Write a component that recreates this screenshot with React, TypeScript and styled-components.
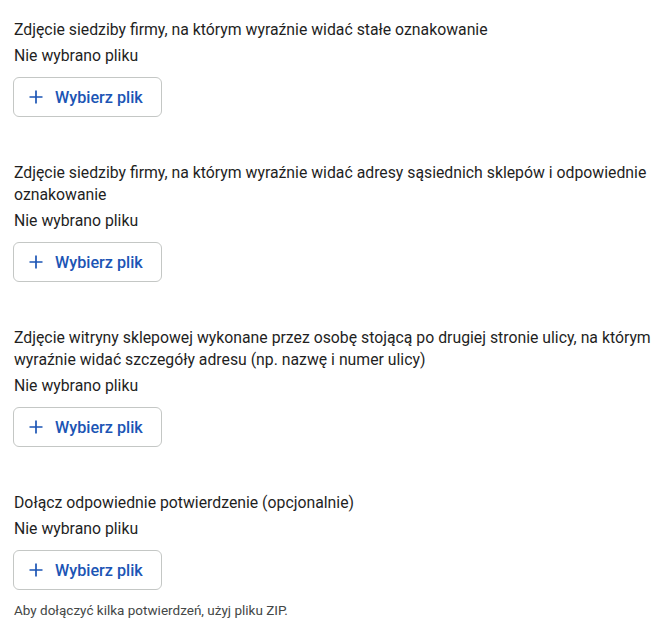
import React, { FC } from 'react';
import styled, { createGlobalStyle } from 'styled-components';

const GlobalStyle = createGlobalStyle`
  body {
    margin: 0;
    background: #ffffff;
    font-family: Roboto, 'Noto Sans', Arial, sans-serif;
    color: #1f1f1f;
  }
`;

const Page = styled.div`
  padding: 19px 4px 20px 14px;
  display: flex;
  flex-direction: column;
  gap: 45px;
`;

const Section = styled.div`
  display: flex;
  flex-direction: column;
  align-items: flex-start;
`;

const Title = styled.div`
  font-size: 15.8px;
  line-height: 22px;
  color: #1f1f1f;
`;

const Status = styled.div`
  margin-top: 4px;
  font-size: 15.8px;
  line-height: 22px;
  color: #1f1f1f;
`;

const PickButton = styled.button`
  margin-top: 10px;
  margin-left: -1px;
  height: 40px;
  width: 149px;
  box-sizing: border-box;
  display: flex;
  align-items: center;
  gap: 12px;
  padding: 0 0 0 15px;
  background: #ffffff;
  border: 1px solid #c4c7c5;
  border-radius: 6px;
  font-family: Roboto, 'Noto Sans', Arial, sans-serif;
  font-size: 16.2px;
  font-weight: 500;
  color: #1c55b5;
  cursor: pointer;
`;

const Note = styled.div`
  margin-top: 12px;
  font-size: 13.5px;
  line-height: 16px;
  color: #444746;
`;

const PlusIcon: FC = () => (
  <svg width="14" height="14" viewBox="0 0 14 14" aria-hidden="true">
    <path d="M7 0.5v13M0.5 7h13" stroke="#1c55b5" strokeWidth="1.7" fill="none" />
  </svg>
);

type UploadProps = {
  title: string;
  note?: string;
};

const Upload: FC<UploadProps> = ({ title, note }) => (
  <Section>
    <Title>{title}</Title>
    <Status>Nie wybrano pliku</Status>
    <PickButton type="button">
      <PlusIcon />
      Wybierz plik
    </PickButton>
    {note && <Note>{note}</Note>}
  </Section>
);

const App: FC = () => (
  <>
    <GlobalStyle />
    <Page>
      <Upload title="Zdjęcie siedziby firmy, na którym wyraźnie widać stałe oznakowanie" />
      <Upload title="Zdjęcie siedziby firmy, na którym wyraźnie widać adresy sąsiednich sklepów i odpowiednie oznakowanie" />
      <Upload title="Zdjęcie witryny sklepowej wykonane przez osobę stojącą po drugiej stronie ulicy, na którym wyraźnie widać szczegóły adresu (np. nazwę i numer ulicy)" />
      <Upload
        title="Dołącz odpowiednie potwierdzenie (opcjonalnie)"
        note="Aby dołączyć kilka potwierdzeń, użyj pliku ZIP."
      />
    </Page>
  </>
);

export default App;
